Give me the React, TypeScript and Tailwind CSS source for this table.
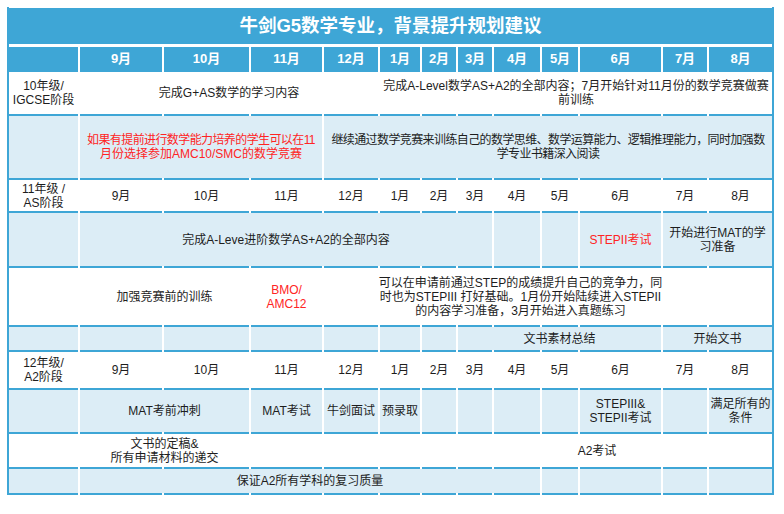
import React from "react";

type Line = string | { t: string; tight: boolean };
type Cell = { span: number; lines?: Line[]; red?: boolean };
type Row = { bg: "w" | "b"; cells: Cell[] };

const spanClass: Record<number, string> = {
  1: "col-span-1",
  2: "col-span-2",
  3: "col-span-3",
  4: "col-span-4",
  5: "col-span-5",
  6: "col-span-6",
  7: "col-span-7",
  8: "col-span-8",
  9: "col-span-9",
};

const months = ["9月", "10月", "11月", "12月", "1月", "2月", "3月", "4月", "5月", "6月", "7月", "8月"];
const monthCells: Cell[] = months.map((m) => ({ span: 1, lines: [m] }));
const E = (span = 1): Cell => ({ span });
const T = (t: string): Line => ({ t, tight: true });

const rows: Row[] = [
  {
    bg: "w",
    cells: [
      { span: 1, lines: ["10年级/", "IGCSE阶段"] },
      { span: 4, lines: ["完成G+AS数学的学习内容"] },
      {
        span: 8,
        lines: ["完成A-Level数学AS+A2的全部内容；7月开始针对11月份的数学竞赛做赛", "前训练"],
      },
    ],
  },
  {
    bg: "b",
    cells: [
      E(),
      {
        span: 3,
        red: true,
        lines: [T("如果有提前进行数学能力培养的学生可以在11"), "月份选择参加AMC10/SMC的数学竞赛"],
      },
      {
        span: 9,
        lines: [
          T("继续通过数学竞赛来训练自己的数学思维、数学运算能力、逻辑推理能力，同时加强数"),
          T("学专业书籍深入阅读"),
        ],
      },
    ],
  },
  { bg: "w", cells: [{ span: 1, lines: ["11年级 /", "AS阶段"] }, ...monthCells] },
  {
    bg: "b",
    cells: [
      E(),
      { span: 7, lines: ["完成A-Leve进阶数学AS+A2的全部内容"] },
      E(),
      E(),
      { span: 1, red: true, lines: ["STEPII考试"] },
      { span: 2, lines: ["开始进行MAT的学", "习准备"] },
    ],
  },
  {
    bg: "w",
    cells: [
      E(),
      { span: 2, lines: ["加强竞赛前的训练"] },
      { span: 1, red: true, lines: ["BMO/", "AMC12"] },
      E(),
      {
        span: 6,
        lines: [
          "可以在申请前通过STEP的成绩提升自己的竞争力，同",
          "时也为STEPIII 打好基础。1月份开始陆续进入STEPII",
          "的内容学习准备，3月开始进入真题练习",
        ],
      },
      E(2),
    ],
  },
  {
    bg: "b",
    cells: [E(), E(), E(), E(), E(), E(), E(), { span: 4, lines: ["文书素材总结"] }, { span: 2, lines: ["开始文书"] }],
  },
  { bg: "w", cells: [{ span: 1, lines: ["12年级/", "A2阶段"] }, ...monthCells] },
  {
    bg: "b",
    cells: [
      E(),
      { span: 2, lines: ["MAT考前冲刺"] },
      { span: 1, lines: ["MAT考试"] },
      { span: 1, lines: ["牛剑面试"] },
      { span: 1, lines: ["预录取"] },
      E(),
      E(),
      E(),
      E(),
      { span: 1, lines: ["STEPIII&", "STEPII考试"] },
      E(),
      { span: 1, lines: ["满足所有的", "条件"] },
    ],
  },
  {
    bg: "w",
    cells: [
      E(),
      { span: 2, lines: ["文书的定稿&", "所有申请材料的递交"] },
      E(),
      E(),
      E(),
      { span: 7, lines: ["A2考试"] },
    ],
  },
  {
    bg: "b",
    cells: [E(), { span: 8, lines: ["保证A2所有学科的复习质量"] }, E(), E(), E(), E()],
  },
];

function Separator({ k }: { k: string }) {
  return (
    <>
      {Array.from({ length: 13 }).map((_, i) => (
        <div key={`${k}-${i}`} className="bg-[#3ea6d6]" />
      ))}
    </>
  );
}

export default function App() {
  return (
    <div
      className="w-[784px] h-[514px] bg-white pl-[7px] pt-[7px] text-[#1d1d1d]"
      style={{ fontFamily: '"Liberation Sans", "Noto Sans CJK SC", sans-serif' }}
    >
      <div className="w-[767px] border-x-2 border-[#3ea6d6] pt-[1px]">
        <div className="h-[36px] bg-[#3ea6d6] flex items-center justify-center text-white font-bold text-[18.5px]">
          牛剑G5数学专业，背景提升规划建议
        </div>
        <div className="mt-[3px] grid grid-cols-[69px_82px_85px_71px_54px_40px_34px_34px_46px_36px_81px_44px_63px] grid-rows-[23px_2px_42px_2px_62px_2px_31px_2px_53px_2px_57px_2px_23px_2px_36px_2px_42px_2px_33px_2px_24px_2px] gap-x-[2px] bg-white">
          <div className="bg-[#3ea6d6]" />
          {months.map((m) => (
            <div
              key={`h-${m}`}
              className="bg-[#3ea6d6] flex items-center justify-center text-white font-bold text-[13px]"
            >
              {m}
            </div>
          ))}
          <Separator k="sh" />
          {rows.map((row, ri) => (
            <React.Fragment key={`r-${ri}`}>
              {row.cells.map((c, ci) => (
                <div
                  key={`c-${ri}-${ci}`}
                  className={`${spanClass[c.span]} ${row.bg === "b" ? "bg-[#dcedf6]" : "bg-white"} ${
                    c.red ? "text-[#ff2424]" : ""
                  } flex flex-col items-center justify-center text-center text-[12px] leading-[14px]`}
                >
                  {c.lines?.map((l, li) =>
                    typeof l === "string" ? (
                      <span key={li} className="whitespace-nowrap">
                        {l}
                      </span>
                    ) : (
                      <span key={li} className="whitespace-nowrap tracking-[-0.6px]">
                        {l.t}
                      </span>
                    )
                  )}
                </div>
              ))}
              <Separator k={`s-${ri}`} />
            </React.Fragment>
          ))}
        </div>
      </div>
    </div>
  );
}
